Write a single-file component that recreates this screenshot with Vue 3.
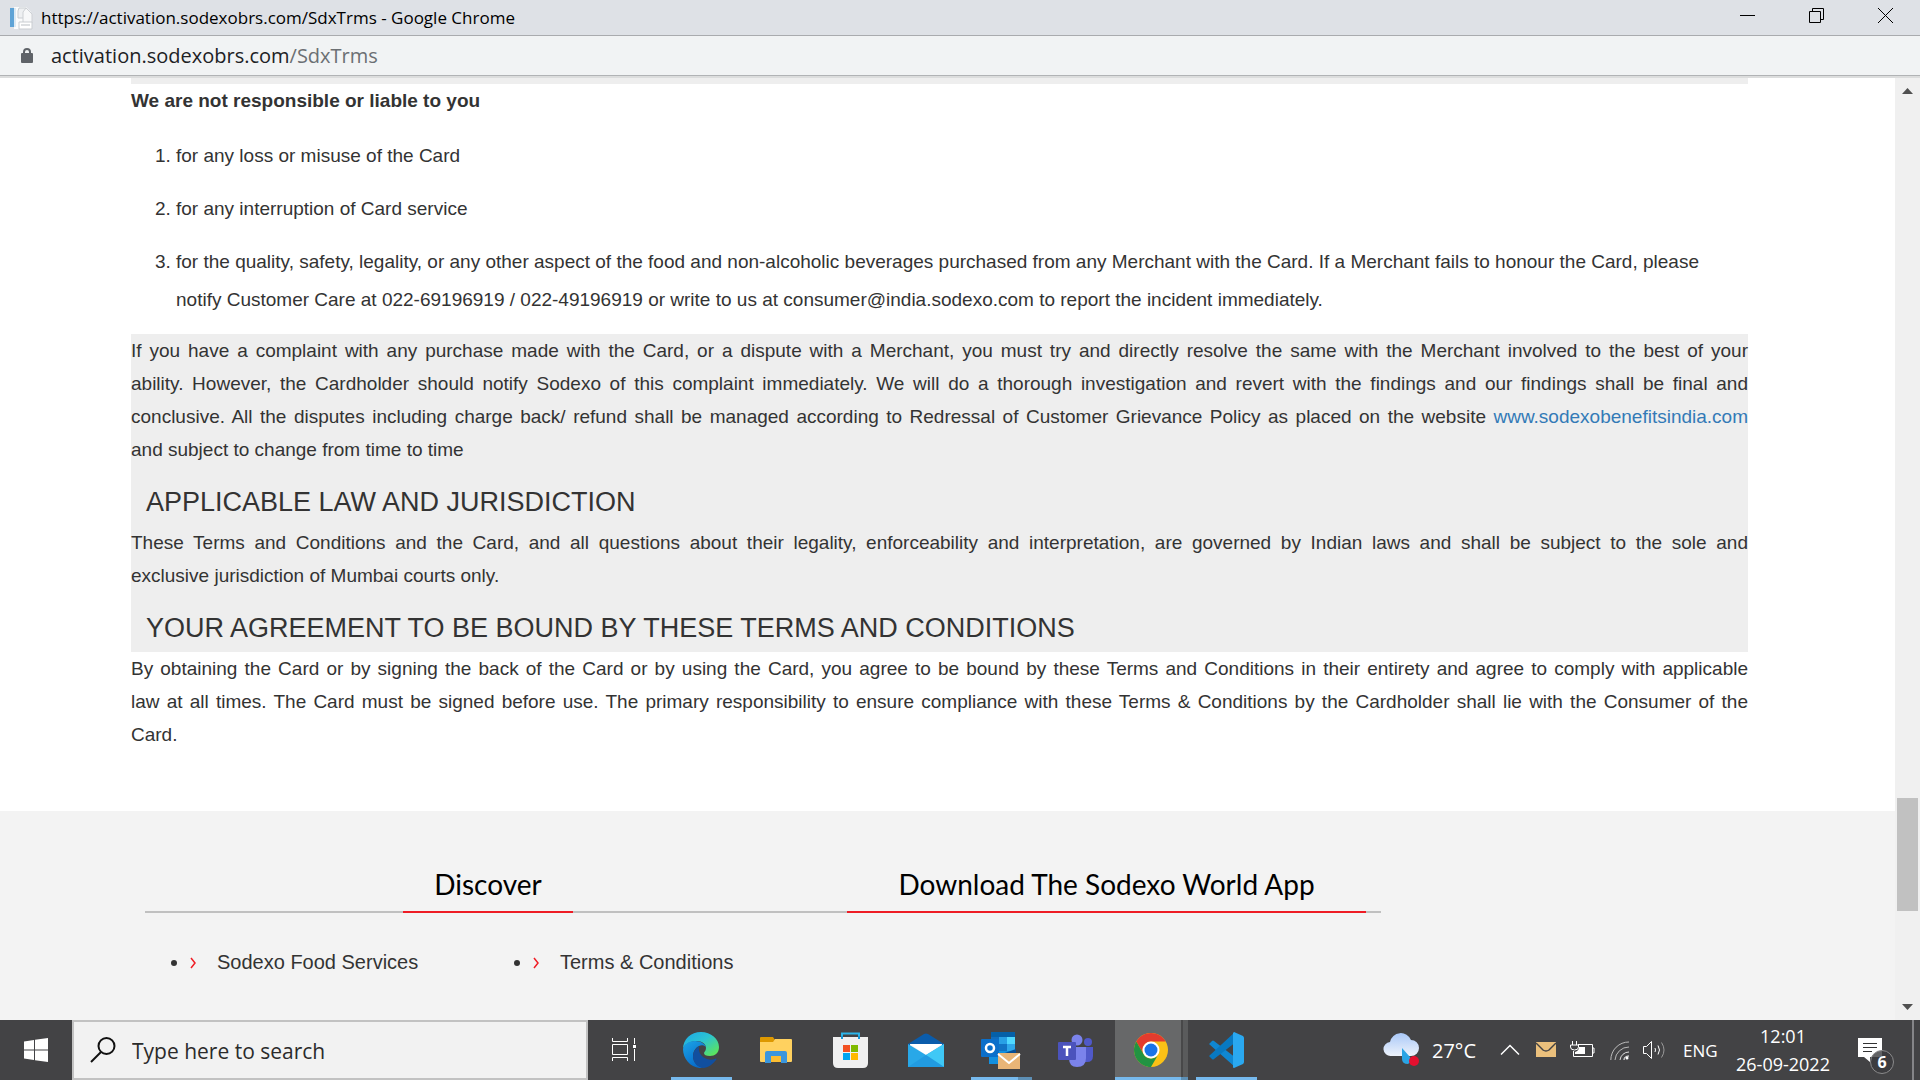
<script setup>
import { ref } from 'vue'

const search = ref('')
const liabilities = [
  'for any loss or misuse of the Card',
  'for any interruption of Card service',
  'for the quality, safety, legality, or any other aspect of the food and non-alcoholic beverages purchased from any Merchant with the Card. If a Merchant fails to honour the Card, please notify Customer Care at 022-69196919 / 022-49196919 or write to us at consumer@india.sodexo.com to report the incident immediately.',
]
const footerLinks = ['Sodexo Food Services', 'Terms & Conditions']
</script>

<template>
  <div class="screen">
    <header class="titlebar">
      <svg class="favicon" width="24" height="24" viewBox="0 0 24 24" aria-hidden="true">
        <path d="M4 1h12l5 5v17H4z" fill="#fafbfc" />
        <path d="M0 2h4v19H0z" fill="#5ea3d6" />
        <path d="M4 2h2v19H4z" fill="#dbe9f3" />
        <path d="M9 2h7v10H8V5z" fill="#eef0f2" stroke="#c9cdd1" />
        <path d="M16 2l6 6v9h-9V6z" fill="#f7f8f9" stroke="#cdd0d4" />
        <path d="M9 16h13v7H9z" fill="#fff" stroke="#c9cdd1" />
        <path d="M11 19h9" stroke="#b9bec3" />
      </svg>
      <span class="title">https://activation.sodexobrs.com/SdxTrms - Google Chrome</span>
      <div class="controls">
        <button aria-label="Minimize"><svg width="15" height="15"><path d="M0 7.500h15" stroke="#000" /></svg></button>
        <button aria-label="Restore">
          <svg width="15" height="15" fill="none" stroke="#000"><path d="M.5 3.500h11v11H.5zM3.500 3.500v-3h11v11h-3" /></svg>
        </button>
        <button aria-label="Close"><svg width="15" height="15"><path d="M0 0l15 15M15 0L0 15" stroke="#000" /></svg></button>
      </div>
    </header>

    <div class="address">
      <svg width="12" height="16" viewBox="0 0 12 16" aria-hidden="true">
        <rect y="5" width="12" height="10" rx="1" fill="#5f6368" />
        <path d="M3 6V4a3 3 0 0 1 6 0v2" fill="none" stroke="#5f6368" stroke-width="2" />
      </svg>
      <span>activation.sodexobrs.com<span class="path">/SdxTrms</span></span>
    </div>

    <div class="viewport">
      <div class="page">
        <main class="terms">
          <div class="strip"></div>
          <p class="lead"><strong>We are not responsible or liable to you</strong></p>
          <ol>
            <li v-for="item in liabilities" :key="item">{{ item }}</li>
          </ol>
          <section class="shaded">
            <p>
              If you have a complaint with any purchase made with the Card, or a dispute with a Merchant, you must try
              and directly resolve the same with the Merchant involved to the best of your<br />
              ability. However, the Cardholder should notify Sodexo of this complaint immediately. We will do a thorough
              investigation and revert with the findings and our findings shall be final and<br />
              conclusive. All the disputes including charge back/ refund shall be managed according to Redressal of
              Customer Grievance Policy as placed on the website <a href="#">www.sodexobenefitsindia.com</a>
              <span class="rest">and subject to change from time to time</span>
            </p>
            <h3>APPLICABLE LAW AND JURISDICTION</h3>
            <p>
              These Terms and Conditions and the Card, and all questions about their legality, enforceability and
              interpretation, are governed by Indian laws and shall be subject to the sole and
              <span class="rest">exclusive jurisdiction of Mumbai courts only.</span>
            </p>
            <h3>YOUR AGREEMENT TO BE BOUND BY THESE TERMS AND CONDITIONS</h3>
          </section>
          <p>
            By obtaining the Card or by signing the back of the Card or by using the Card, you agree to be bound by these
            Terms and Conditions in their entirety and agree to comply with applicable<br />
            law at all times. The Card must be signed before use. The primary responsibility to ensure compliance with
            these Terms &amp; Conditions by the Cardholder shall lie with the Consumer of the
            <span class="rest">Card.</span>
          </p>
        </main>
        <footer class="footer">
          <div class="tabs">
            <h4 class="discover">Discover</h4>
            <h4 class="download">Download The Sodexo World App</h4>
          </div>
          <ul>
            <li v-for="link in footerLinks" :key="link">
              <svg width="7" height="12" viewBox="0 0 7 12" aria-hidden="true"><path d="M1 1l4 5-4 5" fill="none" stroke="#f01c24" stroke-width="1.500" /></svg>
              <a href="#">{{ link }}</a>
            </li>
          </ul>
        </footer>
      </div>
      <div class="scrollbar">
        <svg width="11" height="6"><path d="M5.500 0L11 6H0z" fill="#505050" /></svg>
        <div class="track"><div class="thumb"></div></div>
        <svg width="11" height="6"><path d="M0 0h11L5.500 6z" fill="#505050" /></svg>
      </div>
    </div>

    <nav class="taskbar">
      <button class="start" aria-label="Start">
        <svg width="24" height="24" viewBox="0 0 24 24" fill="#fff"><path d="M0 3.400l10-1.400v9.500H0zM11 1.800L24 0v11.500H11zM0 12.500h10V22L0 20.600zM11 12.500h13V24l-13-1.800z" /></svg>
      </button>
      <label class="search">
        <svg width="26" height="26" viewBox="0 0 26 26" fill="none" stroke="#111" stroke-width="2"><circle cx="16.500" cy="9" r="8" /><path d="M11 15L1 25" /></svg>
        <input v-model="search" type="text" placeholder="Type here to search" aria-label="Search" />
      </label>
      <button class="taskview" aria-label="Task View">
        <svg width="25" height="24" viewBox="0 0 25 24" fill="none" stroke="#fff"><path d="M.5 0v3.500h15V0M.5 6.500h15v10H.5zM.5 23v-3.500h15V23M22.500 0v6M22.500 11v12" /><path d="M21 7h3v3h-3z" fill="#fff" stroke="none" /></svg>
      </button>

      <div class="apps">
        <button class="running" aria-label="Edge">
          <svg width="36" height="36" viewBox="0 0 36 36">
            <defs>
              <linearGradient id="edgeTop" x1="0" y1="0" x2="1" y2="1"><stop offset="0" stop-color="#1ba7e8" /><stop offset=".45" stop-color="#2cc3d2" /><stop offset="1" stop-color="#66eb43" /></linearGradient>
              <linearGradient id="edgeLeft" x1="0" y1="0" x2=".6" y2="1"><stop offset="0" stop-color="#1ca5e6" /><stop offset="1" stop-color="#0669ca" /></linearGradient>
            </defs>
            <path d="M0 17C0 7 8 0 18 0c10 0 18 7 18 15 0 6-4 9-9 9-4 0-6-1-6-3 0-1 2-2 2-5 0-4-4-7-9-7C6 9 1 13 0 17z" fill="url(#edgeTop)" />
            <path d="M0 17C1 12 6 9 12 9c6 0 10 3 11 6-2-2-5-2-7-1-4 2-6 6-6 10 0 6 4 10 10 12C9 37 0 28 0 17z" fill="url(#edgeLeft)" />
            <path d="M16 14c-4 3-6 6-6 10 0 7 5 12 11 12 5-1 9-4 12-8 1-1 0-2-1-1-3 1-5 1-8 0-6-2-9-7-8-13z" fill="#114f9f" />
          </svg>
        </button>
        <button aria-label="File Explorer">
          <svg width="32" height="28" viewBox="0 0 32 28"><path d="M0 2q0-1 1-1h12l2 3-2 3H0z" fill="#dd9800" /><path d="M0 6h13l2-3h16q1 0 1 1v21q0 1-1 1H1q-1 0-1-1z" fill="#ffd15f" /><path d="M5 27V17q0-2 2-2h18q2 0 2 2v10h-6v-7H11v7z" fill="#3b96dd" /><path d="M11 20h10v6H11z" fill="#fbbd32" /></svg>
        </button>
        <button aria-label="Microsoft Store">
          <svg width="35" height="36" viewBox="0 0 35 36"><path d="M9 8V1.500h17V8" fill="none" stroke="#2cb5ea" stroke-width="2" /><path d="M0 5h35v26q0 5-5 5H5q-5 0-5-5z" fill="#f0f0f0" /><path d="M9 4v3M26 4v3" stroke="#1698d8" stroke-width="2" /><path d="M10 13h7v7h-7z" fill="#f25022" /><path d="M18 13h7v7h-7z" fill="#7fba00" /><path d="M10 21h7v7h-7z" fill="#00a4ef" /><path d="M18 21h7v7h-7z" fill="#ffb900" /></svg>
        </button>
        <button aria-label="Mail">
          <svg width="36" height="34" viewBox="0 0 36 34"><path d="M0 11L16 1q2-1 4 0l16 10v4H0z" fill="#0a5cab" /><path d="M2 11h32v12H2z" fill="#f4f4f4" /><path d="M2 11h32L20 20.500q-2 1-4 0z" fill="#fff" /><path d="M0 11l18 11L36 11v23H0z" fill="#28a8e8" /><path d="M18 22l18-11v23z" fill="#3fc8f6" /><path d="M0 34h36L18 22z" fill="#1d93dc" opacity=".6" /></svg>
        </button>
        <button class="running grouped" aria-label="Outlook">
          <svg width="40" height="38" viewBox="0 0 40 38">
            <path d="M10 1h24v20H10z" fill="#0f6cbd" /><path d="M10 1h24v5H10z" fill="#0560a8" /><path d="M18 6h8v7h-8z" fill="#28a0e5" /><path d="M26 6h8v7h-8z" fill="#50d9ff" /><path d="M18 13h8v7h-8z" fill="#1273c4" /><path d="M26 13h8v7h-8z" fill="#2fa8ea" /><path d="M8 20h27v8L18 33H8z" fill="#1490df" /><path d="M35 18v8l-14-3z" fill="#0a4f95" />
            <rect y="8" width="18" height="18" rx="1" fill="#0b6fca" /><circle cx="9" cy="17" r="4" fill="none" stroke="#fff" stroke-width="2.500" />
            <path d="M17 22h22v16H17z" fill="#e9b577" /><path d="M17 23l11 9 11-9" fill="none" stroke="#fff" stroke-width="2" />
          </svg>
        </button>
        <button aria-label="Teams">
          <svg class="teams" width="36" height="33" viewBox="0 0 36 33"><circle cx="30" cy="8" r="4" fill="#5059c9" /><path d="M26 13h9v9q0 6-6 6h-3z" fill="#5059c9" /><circle cx="19" cy="6" r="5.500" fill="#7b83eb" /><path d="M11 13h17v11q0 9-9 9-8 0-8-9z" fill="#7b83eb" /><rect y="8" width="18" height="18" rx="1" fill="#4b53bc" /><path d="M5 13h8M9 13v9" stroke="#fff" stroke-width="2.500" /></svg>
        </button>
        <button class="running active grouped" aria-label="Chrome">
          <svg width="34" height="34" viewBox="0 0 34 34"><circle cx="17" cy="17" r="17" fill="#fbc116" /><path d="M2.300 8.500A17 17 0 0 1 31.700 8.500H17a8.500 8.500 0 0 0-7.400 12.700z" fill="#e33b2e" /><path d="M2.300 8.500A17 17 0 0 0 17 34l7.400-12.800a8.500 8.500 0 0 1-14.800 0z" fill="#229342" /><circle cx="17" cy="17" r="8.500" fill="#fff" /><circle cx="17" cy="17" r="6.500" fill="#1a73e8" /></svg>
        </button>
        <button class="running" aria-label="Visual Studio Code">
          <svg width="36" height="36" viewBox="0 0 36 36"><path d="M1 12l3-3q1-1 2 0l22 17-1 9z" fill="#0f87d2" /><path d="M1 24l3 3q1 1 2 0l22-17-1-10z" fill="#0879c2" /><path d="M26 0l9 4q1 1 1 2v24q0 1-1 2l-9 4q-1 0-1-1V1z" fill="#2aa8f0" /></svg>
        </button>
      </div>

      <div class="tray">
        <svg class="weather" width="38" height="34" viewBox="0 0 38 34">
          <defs><linearGradient id="cloud" x2="0" y2="1"><stop offset="0" stop-color="#a9c8f8" /><stop offset="1" stop-color="#eef3fb" /></linearGradient></defs>
          <path d="M8 23a7 7 0 0 1-1-14A11 11 0 0 1 28 7a8 8 0 0 1 0 16z" fill="url(#cloud)" /><path d="M19 15l8 9q2 5-2 7-6 0-6-5z" fill="#2aa4e4" /><circle cx="31" cy="28" r="5" fill="#e3102f" />
        </svg>
        <span class="temp">27°C</span>
        <svg class="caret" width="20" height="12" viewBox="0 0 20 12"><path d="M1 10.500l9-9 9 9" fill="none" stroke="#fff" stroke-width="1.500" /></svg>
        <svg class="mail" width="20" height="16" viewBox="0 0 20 16"><path d="M0 0h20v15H0z" fill="#ebc07c" /><path d="M0 1l7 7q3 2 6 0l7-7" fill="none" stroke="#424244" stroke-width="1.500" /></svg>
        <svg class="battery" width="26" height="18" viewBox="0 0 26 18" fill="none" stroke="#fff"><path d="M9 3.500h14.500v12h-19V10M24 7h1v5h-1M3.500 0v4M7.500 0v4M1.500 4h8v2q0 3-4 3t-4-3z" /><path d="M10 6h6v7H6v-2q4-1 4-5z" fill="#fff" stroke="none" /></svg>
        <svg class="wifi" width="19" height="19" viewBox="0 0 19 19" fill="none"><path d="M.8 19A18 18 0 0 1 19 1M5 19A14 14 0 0 1 19 6" stroke="#bbb" /><path d="M10 19a9 9 0 0 1 9-8" stroke="#ddd" /><path d="M14 19q0-4 5-4" stroke="#fff" /><circle cx="17" cy="17" r="1.500" fill="#fff" /></svg>
        <svg class="sound" width="25" height="20" viewBox="0 0 25 20" fill="none" stroke="#fff"><path d="M1.500 6.500h3l5-5v17l-5-5h-3zM13 8q1 2 0 4M16 5.500q3 4.500 0 9" /><path d="M19.500 2.500q5 7.500 0 15" stroke="#999" /></svg>
        <span class="lang">ENG</span>
        <div class="clock"><span>12:01</span><span>26-09-2022</span></div>
        <button class="notices" aria-label="Notifications">
          <svg width="24" height="24" viewBox="0 0 24 24"><path d="M0 0h24v19H12v5l-6-5H0z" fill="#fff" /><path d="M5 5.500h14M5 9.500h14M5 13.500h9" stroke="#333" /></svg>
          <span class="badge">6</span>
        </button>
        <div class="desktop"></div>
      </div>
    </nav>
  </div>
</template>

<style>
body {
  margin: 0;
}
</style>

<style scoped>
* {
  box-sizing: border-box;
}
.screen {
  display: flex;
  flex-direction: column;
  min-height: 100vh;
  background: #fff;
  font-family: "Liberation Sans", Arial, sans-serif;
  font-size: 20px;
  color: #333;
}
svg {
  display: block;
  flex: none;
}
button {
  display: flex;
  align-items: center;
  justify-content: center;
  flex: none;
  padding: 0;
  border: 0;
  background: none;
}
a {
  color: #337ab7;
  text-decoration: none;
}

.titlebar {
  display: flex;
  align-items: center;
  height: 36px;
  padding-left: 10px;
  border-bottom: 1px solid #a9abae;
  background: #dee1e6;
  color: #000;
  font-family: "Open Sans", sans-serif;
  font-size: 17px;
}
.title {
  margin-left: 7px;
}
.controls {
  display: flex;
  align-self: flex-start;
  margin-left: auto;
}
.controls button {
  width: 69px;
  height: 31px;
}

.address {
  display: flex;
  align-items: center;
  gap: 18px;
  height: 40px;
  padding-left: 21px;
  border-bottom: 1px solid #b1b3b5;
  background: #f1f3f4;
  color: #202124;
  font-family: "Open Sans", sans-serif;
  font-size: 20px;
}
.path {
  color: #6b6f73;
}

.viewport {
  display: flex;
  flex: 1;
  border-top: 2px solid #dcdddd;
}
.page {
  display: flex;
  flex: 1;
  flex-direction: column;
}
.terms {
  margin: 0 147px 60px 131px;
  font-size: 19px;
}
.strip {
  height: 6px;
  background: #eee;
}
p {
  margin: 0;
  line-height: 33px;
  text-align: justify;
  text-align-last: justify;
}
.lead,
.rest {
  text-align-last: left;
}
.rest {
  display: block;
}
ol {
  margin: 20px 0 0;
  padding-left: 45px;
  line-height: 38px;
}
ol li {
  margin-bottom: 15px;
}
.shaded {
  background: #eee;
}
h3 {
  margin: 0;
  padding: 21px 15px 8px;
  font-size: 27px;
  font-weight: 400;
  line-height: 31px;
}

.footer {
  flex: 1;
  padding: 55px 0 28px 145px;
  background: #f3f3f3;
}
.tabs {
  display: flex;
  width: 1236px;
  border-bottom: 2px solid #c0c0c0;
}
h4 {
  margin: 0 0 -2px;
  padding: 0 0 8px;
  border-bottom: 2px solid #ee1c25;
  color: #000;
  font-family: Lato, sans-serif;
  font-size: 28px;
  font-weight: 400;
  line-height: 37px;
  text-align: center;
}
.discover {
  width: 170px;
  margin-left: 258px;
}
.download {
  width: 519px;
  margin-left: 274px;
}
.footer ul {
  display: flex;
  margin: 33px 0 0;
  padding: 0 0 0 45px;
  line-height: 33px;
}
.footer li {
  width: 343px;
}
.footer li svg {
  display: inline-block;
  margin-right: 20px;
}
.footer li a {
  color: #333;
}

.scrollbar {
  display: flex;
  flex: none;
  flex-direction: column;
  align-items: center;
  width: 25px;
  padding: 10px 0;
  background: #f0f0f0;
}
.track {
  display: flex;
  flex: 1;
  flex-direction: column;
  justify-content: flex-end;
  width: 21px;
  padding-bottom: 93px;
}
.thumb {
  height: 113px;
  background: #c1c1c1;
}

.taskbar {
  display: flex;
  align-items: stretch;
  height: 60px;
  background: #434345;
  color: #fff;
  font-family: "Open Sans", sans-serif;
}
.start {
  width: 72px;
}
.search {
  display: flex;
  flex: none;
  align-items: center;
  gap: 16px;
  width: 516px;
  padding-left: 16px;
  border: 2px solid #c2c2c2;
  background: #f2f2f2;
}
.search input {
  flex: 1;
  padding: 2px 0 0;
  border: 0;
  outline: 0;
  background: none;
  color: #222;
  font-family: inherit;
  font-size: 21px;
}
.search input::placeholder {
  color: #2b2b2b;
  opacity: 1;
}
.taskview {
  width: 72px;
}
.apps {
  display: flex;
  margin-left: 3px;
}
.apps button {
  position: relative;
  width: 75px;
}
.running::after {
  position: absolute;
  bottom: 0;
  left: 8px;
  width: 61px;
  height: 3px;
  background: #76b9ed;
  content: "";
}
.grouped::after {
  background: linear-gradient(90deg, #76b9ed 77%, #5d8fb5 77%);
}
.apps .active {
  background: linear-gradient(90deg, transparent 2px, #676869 2px, #676869 68px, #484849 68px, #484849 70px, #5a5b5c 70px);
}
.active::after {
  left: 2px;
  width: 73px;
  background: linear-gradient(90deg, #76b9ed 90%, #5d8fb5 90%);
}

.tray {
  display: flex;
  align-items: center;
  margin-left: auto;
  white-space: nowrap;
}
.weather {
  margin-right: 11px;
}
.temp {
  width: 43px;
  margin-right: 25px;
}
.caret {
  margin-right: 16px;
}
.mail {
  margin-right: 13px;
}
.battery {
  margin-right: 15px;
}
.wifi {
  margin-right: 13px;
}
.sound {
  margin-right: 16px;
}
.lang {
  width: 33px;
  margin-right: 20px;
  font-size: 17px;
}
.clock {
  display: flex;
  flex-direction: column;
  align-items: center;
  width: 94px;
  margin-right: 28px;
  font-size: 18px;
  line-height: 28px;
}
.notices {
  position: relative;
  width: 24px;
  margin-right: 30px;
}
.badge {
  position: absolute;
  top: 12px;
  left: 12px;
  width: 24px;
  height: 24px;
  border: 1px solid #8b8b8c;
  border-radius: 50%;
  background: #3b3b3dcc;
  color: #fff;
  font-family: "Open Sans", sans-serif;
  font-size: 16px;
  font-weight: 700;
  line-height: 22px;
  text-align: center;
}
.desktop {
  align-self: stretch;
  width: 8px;
  border-left: 2px solid #858588;
}
</style>
